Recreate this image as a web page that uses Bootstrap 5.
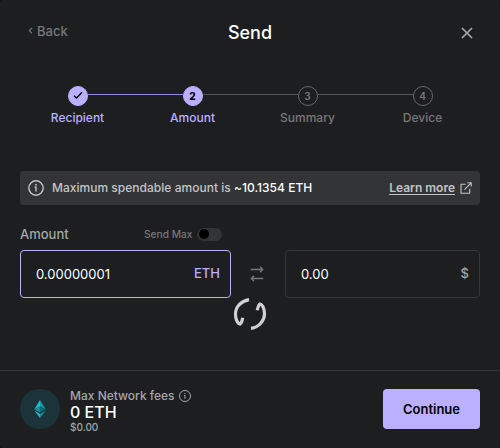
<!DOCTYPE html>
<html lang="en">
<head>
<meta charset="utf-8">
<meta name="viewport" content="width=device-width, initial-scale=1">
<title>Send</title>
<link rel="stylesheet" href="https://cdn.jsdelivr.net/npm/bootstrap@5.3.0/dist/css/bootstrap.min.css">
<style>
body{background:#101112;font-family:Inter,"Liberation Sans",sans-serif;font-size:13px;line-height:16px;font-weight:500;color:#fff;overflow:hidden}
svg{display:block;flex:none;fill:none;stroke:currentColor}
.send-modal{width:500px;height:448px;background:#1d1e20;border-radius:3px}
.send-head{height:86px;padding:25px 27px 0}
.send-head h1{font-size:18px;line-height:16px;font-weight:500;margin:0;text-align:center}
.side{width:80px}
.back-link{color:#77787a;gap:4px;margin-top:-2px}
.dim{color:#77787a}
.soft{color:#a5a6a8}
.lilac{color:#bbb0ff}
.steps{padding:0 20px;height:85px}
.step-item{width:115px;font-size:12px;line-height:16px}
.step-name{margin-top:4px}
.rail{height:1px;background:#545557;margin-top:-3px}
.rail.on{background:#9488e8}
.rail.none{background:none}
.dot{width:20px;height:20px;border:1px solid #66676a;font-size:10px;font-weight:600;line-height:1}
.dot.on{background:#bbb0ff;border-color:#bbb0ff;color:#000;font-weight:800}
.notice{margin:0 20px;height:34px;background:#333436;border-radius:4px;padding:0 8px;font-size:12px;color:#c3c4c6}
.notice .tip{letter-spacing:.02px}
.notice a{color:#c3c4c6;font-weight:600;text-underline-offset:2px;margin-right:5px}
.labels{margin:21px 20px 0;height:16px}
.sendmax{font-size:10.2px;width:78px;margin-right:258px}
.toggle{width:25px;height:13px;background:#333436;border-radius:7px;padding:1.5px}
.toggle i{width:10px;height:10px;background:#000}
.fields{margin:8px 20px 0;height:48px}
.field{border:1px solid #35363a;border-radius:4px;padding:0 10px 0 15px}
.field.active{border-color:#bbb0ff;width:211px}
.field.right{width:195px}
.field input{background:none;border:0;outline:0;padding:0;width:110px;color:#fff;font:400 13px Inter,"Liberation Sans",sans-serif}
.field span{margin-top:-2px}
.swap svg{margin-right:2px}
.loader{height:32px;color:#d0d0d0}
.send-foot{height:78px;border-top:1px solid #353638;padding:18px 20px 0}
.coin{width:40px;height:40px;background:#1c3439}
.coin svg{stroke:none}
.fees{font-size:12px;line-height:14px;margin-left:10px}
.fees .eth{font-size:16px;line-height:19px}
.fees .usd{font-size:10px;line-height:10px}
.go{width:97px;height:40px;background:#bbb0ff;color:#000;font-size:13px;font-weight:600;border-radius:4px;padding:1px 0 0;border:0}
</style>
<script src="https://cdn.jsdelivr.net/npm/bootstrap@5.3.0/dist/js/bootstrap.bundle.min.js"></script>
</head>
<body>
<main class="send-modal d-flex flex-column">
  <header class="send-head d-flex justify-content-between align-items-start">
    <div class="side back-link d-flex align-items-center"><svg width="6" height="8" viewBox="0 0 6 8" stroke-width="1.2"><path d="M5 1 2.3 3.7 5 6.4"/></svg><span>Back</span></div>
    <h1>Send</h1>
    <div class="side d-flex justify-content-end soft"><svg width="12" height="16" viewBox="0 0 12 16" stroke-width="1.7"><path d="m1 3 10 10M11 3 1 13"/></svg></div>
  </header>
  <section class="steps d-flex align-items-start">
    <div class="step-item lilac"><div class="d-flex align-items-center"><div class="rail none flex-fill"></div><div class="dot on rounded-circle d-flex align-items-center justify-content-center"><svg width="10" height="10" viewBox="0 0 10 10" stroke-width="1.3"><path d="M1 4.7 3.6 7 9 1.3"/></svg></div><div class="rail on flex-fill"></div></div><div class="text-center step-name">Recipient</div></div>
    <div class="step-item lilac"><div class="d-flex align-items-center"><div class="rail on flex-fill"></div><div class="dot on rounded-circle d-flex align-items-center justify-content-center">2</div><div class="rail flex-fill"></div></div><div class="text-center step-name">Amount</div></div>
    <div class="step-item dim"><div class="d-flex align-items-center"><div class="rail flex-fill"></div><div class="dot rounded-circle d-flex align-items-center justify-content-center">3</div><div class="rail flex-fill"></div></div><div class="text-center step-name">Summary</div></div>
    <div class="step-item dim"><div class="d-flex align-items-center"><div class="rail flex-fill"></div><div class="dot rounded-circle d-flex align-items-center justify-content-center">4</div><div class="rail none flex-fill"></div></div><div class="text-center step-name">Device</div></div>
  </section>
  <section class="notice d-flex align-items-center">
    <svg class="me-2" width="16" height="16" viewBox="0 0 16 16" stroke-width="1.4"><circle cx="8" cy="8" r="7.2"/><path d="M6.6 7.3H8v4.3"/><circle cx="8" cy="4.8" r=".95" fill="currentColor" stroke="none"/></svg>
    <span class="tip">Maximum spendable amount is <span class="text-white">~10.1354 ETH</span></span>
    <a class="ms-auto" href="#">Learn more</a>
    <svg width="12" height="12" viewBox="0 0 12 12" stroke-width="1.1"><path d="M5.6 2.3H1v9h8.7V6.8M4.5 7.7l6.6-6.8M7.4.8h3.8v3.8"/></svg>
  </section>
  <div class="labels d-flex align-items-center">
    <span class="soft">Amount</span>
    <div class="sendmax dim d-flex align-items-center justify-content-between ms-auto text-nowrap"><span>Send Max</span><div class="toggle"><i class="rounded-circle d-block"></i></div></div>
  </div>
  <div class="fields d-flex">
    <label class="field active d-flex align-items-center justify-content-between"><input value="0.00000001" aria-label="Amount in ETH"><span class="lilac">ETH</span></label>
    <div class="swap dim d-flex align-items-center justify-content-center flex-fill"><svg width="14" height="16" viewBox="0 0 14 16" stroke-width="1.3"><path d="M.7 3.5h12M10 .8l2.7 2.7L10 6.2M13.3 12.5h-12M4 9.8l-2.7 2.7L4 15.2"/></svg></div>
    <label class="field right d-flex align-items-center justify-content-between"><input value="0.00" aria-label="Amount in USD"><span class="soft">$</span></label>
  </div>
  <div class="loader d-flex justify-content-center"><svg width="34" height="32" viewBox="233 298 34 32" stroke-width="3.2"><path d="M249 299.6C241 301 235.5 307 235.5 314c0 4 1.5 9.5 4.6 10 1.1-.8 2-2.8 2.6-6.3M251 328.4C259 327.3 264.5 320.5 264.5 314c0-4-1.5-9.5-4.6-10-1.1.8-2 2.8-2.6 6.3"/></svg></div>
  <footer class="send-foot mt-auto d-flex align-items-start">
    <div class="coin rounded-circle d-flex align-items-center justify-content-center"><svg width="12" height="18" viewBox="0 0 12 18"><path d="M6 0v6.5L.3 9.2Z" fill="#22bccb"/><path d="m6 0 5.7 9.2L6 6.5Z" fill="#149baa"/><path d="M6 6.5v6L.3 9.2Z" fill="#138f9c"/><path d="m6 6.5 5.7 2.7L6 12.5Z" fill="#0b6974"/><path d="M.3 10.6 6 14v4Z" fill="#22bccb"/><path d="M11.7 10.6 6 14v4Z" fill="#138f9c"/></svg></div>
    <div class="fees">
      <div class="soft d-flex align-items-center gap-1">Max Network fees <svg width="12" height="12" viewBox="0 0 12 12"><circle cx="6" cy="6" r="5.5"/><path d="M5 5.5h1v3.3"/><circle cx="6" cy="3.6" r=".7" fill="currentColor" stroke="none"/></svg></div>
      <div class="eth">0 ETH</div>
      <div class="usd soft">$0.00</div>
    </div>
    <button class="btn go ms-auto">Continue</button>
  </footer>
</main>
</body>
</html>
